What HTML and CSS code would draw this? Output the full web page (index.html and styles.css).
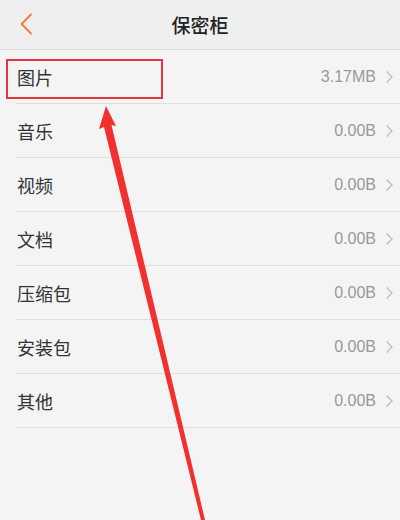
FILE: index.html
```html
<!DOCTYPE html>
<html lang="zh">
<head>
<meta charset="utf-8">
<link rel="stylesheet" href="styles.css">
</head>
<body>
<div class="page">
  <header class="topbar">
    <span class="back">
      <svg width="14" height="22" viewBox="0 0 14 22"><path d="M12 1.5 L2.5 11 L12 20.5" fill="none" stroke="#ec7a3c" stroke-width="1.8" stroke-linecap="round" stroke-linejoin="round"/></svg>
    </span>
    <h1 class="title">保密柜</h1>
  </header>
  <ul class="list">
    <li class="row"><span class="name">图片</span><span class="size">3.17MB</span><svg class="chev" width="9" height="14" viewBox="0 0 9 14"><path d="M1.5 1.5 L7 7 L1.5 12.5" fill="none" stroke="#bcbcbc" stroke-width="1.3"/></svg></li>
    <li class="row"><span class="name">音乐</span><span class="size">0.00B</span><svg class="chev" width="9" height="14" viewBox="0 0 9 14"><path d="M1.5 1.5 L7 7 L1.5 12.5" fill="none" stroke="#bcbcbc" stroke-width="1.3"/></svg></li>
    <li class="row"><span class="name">视频</span><span class="size">0.00B</span><svg class="chev" width="9" height="14" viewBox="0 0 9 14"><path d="M1.5 1.5 L7 7 L1.5 12.5" fill="none" stroke="#bcbcbc" stroke-width="1.3"/></svg></li>
    <li class="row"><span class="name">文档</span><span class="size">0.00B</span><svg class="chev" width="9" height="14" viewBox="0 0 9 14"><path d="M1.5 1.5 L7 7 L1.5 12.5" fill="none" stroke="#bcbcbc" stroke-width="1.3"/></svg></li>
    <li class="row"><span class="name">压缩包</span><span class="size">0.00B</span><svg class="chev" width="9" height="14" viewBox="0 0 9 14"><path d="M1.5 1.5 L7 7 L1.5 12.5" fill="none" stroke="#bcbcbc" stroke-width="1.3"/></svg></li>
    <li class="row"><span class="name">安装包</span><span class="size">0.00B</span><svg class="chev" width="9" height="14" viewBox="0 0 9 14"><path d="M1.5 1.5 L7 7 L1.5 12.5" fill="none" stroke="#bcbcbc" stroke-width="1.3"/></svg></li>
    <li class="row"><span class="name">其他</span><span class="size">0.00B</span><svg class="chev" width="9" height="14" viewBox="0 0 9 14"><path d="M1.5 1.5 L7 7 L1.5 12.5" fill="none" stroke="#bcbcbc" stroke-width="1.3"/></svg></li>
  </ul>
  <div class="highlight"></div>
  <svg class="arrow" width="400" height="520" viewBox="0 0 400 520">
    <polygon points="106,106 116,126 111.5,125 205,520 201,520 104,127 99,129" fill="#f2302f"/>
  </svg>
</div>
</body>
</html>
```

FILE: styles.css
```css
* { box-sizing: border-box; }
html, body { margin: 0; padding: 0; }
body {
  width: 400px;
  height: 520px;
  background: #f4f4f4;
  font-family: "Noto Sans CJK SC", "Noto Sans", sans-serif;
  overflow: hidden;
}
.page {
  position: relative;
  width: 400px;
  height: 520px;
}
.topbar {
  height: 50px;
  background: #efefef;
  border-bottom: 1px solid #dcdcdc;
  display: flex;
  align-items: center;
  justify-content: center;
  position: relative;
}
.back {
  position: absolute;
  left: 19px;
  top: 13px;
  display: flex;
}
.title {
  margin: 0;
  font-size: 19px;
  font-weight: 500;
  color: #222;
}
.list {
  list-style: none;
  margin: 0;
  padding: 0 0 0 16px;
}
.row {
  height: 54px;
  display: flex;
  align-items: center;
  border-bottom: 1px solid #e0e0e0;
  padding-right: 6px;
}
.name {
  flex: 1;
  font-size: 18px;
  color: #333;
  margin-left: 1px;
}
.size {
  font-family: "Liberation Sans", "Noto Sans", sans-serif;
  font-size: 16px;
  color: #999;
  margin-right: 9px;
}
.chev {
  display: block;
}
.highlight {
  position: absolute;
  left: 6px;
  top: 59px;
  width: 157px;
  height: 40px;
  border: 2px solid #e8343a;
}
.arrow {
  position: absolute;
  left: 0;
  top: 0;
}
```
